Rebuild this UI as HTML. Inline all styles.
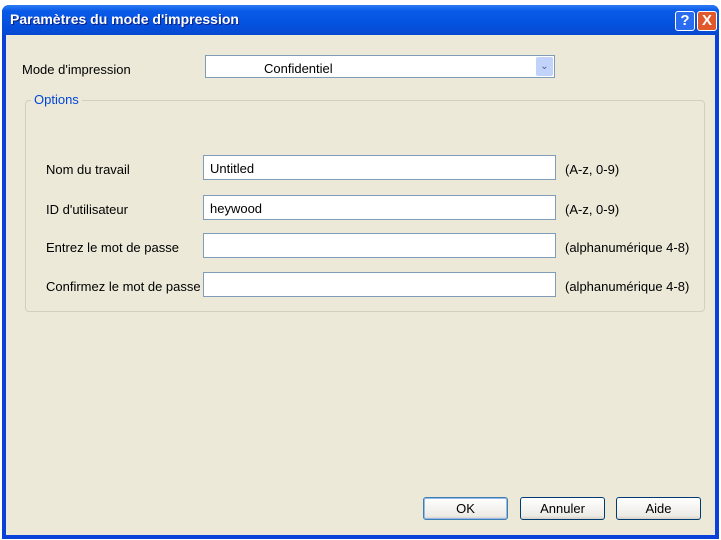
<!DOCTYPE html><html><head><style>
body{margin:0;width:721px;height:540px;background:#fff;position:relative;overflow:hidden;font-family:"Liberation Sans",sans-serif;font-size:13px;color:#000}
.a{position:absolute}
.win{left:2px;top:5px;width:717px;height:534px;background:#0842d8;border-radius:7px 7px 0 0}
.title{left:2px;top:5px;width:717px;height:30px;border-radius:7px 7px 0 0;background:linear-gradient(#2d7cf5,#0a5ae8 20%,#0452e0 60%,#0649d0)}
.body{left:6px;top:35px;width:709px;height:500px;background:#ece9d8}
.inp{background:#fff;border:1px solid #7f9db9;height:22px;box-sizing:border-box;padding:5px 6px 0;font-size:13px}
.lab{font-size:13px}
.btn{height:23px;width:85px;box-sizing:border-box;border:1px solid #003c74;border-radius:3px;background:linear-gradient(#fff,#ecebe6 85%,#d6d0c5);text-align:center;line-height:21px;font-size:13px}
</style></head><body>
<div class="a win"></div>
<div class="a title"></div>
<div class="a" style="left:10px;top:11px;color:#fff;font-weight:bold;font-size:14px;text-shadow:1px 1px #0a1e80">Paramètres du mode d'impression</div>
<div class="a" style="left:675px;top:11px;width:20px;height:20px;border:1px solid #fff;border-radius:3px;background:#2a6cf0;box-sizing:border-box;color:#fff;font-weight:bold;text-align:center;font-size:15px;line-height:18px">?</div>
<div class="a" style="left:697px;top:11px;width:20px;height:20px;border:1px solid #fff;border-radius:3px;background:#e0582c;box-sizing:border-box;color:#fff;font-weight:bold;text-align:center;font-size:15px;line-height:18px">X</div>
<div class="a body"></div>
<div class="a lab" style="left:22px;top:62px">Mode d'impression</div>
<div class="a inp" style="left:205px;top:55px;width:350px;height:23px;padding:5px 0 0 58px">Confidentiel</div>
<div class="a" style="left:536px;top:57px;width:17px;height:19px;background:#c1d3fb;border-radius:2px;color:#4d6185;font-size:10px;text-align:center;line-height:19px">&#8964;</div>
<div class="a" style="left:25px;top:100px;width:680px;height:212px;border:1px solid #d0d0bf;border-radius:4px;box-sizing:border-box"></div>
<div class="a" style="left:31px;top:92px;background:#ece9d8;color:#0046d5;padding:0 3px">Options</div>
<div class="a lab" style="left:46px;top:162px">Nom du travail</div>
<div class="a lab" style="left:46px;top:202px">ID d'utilisateur</div>
<div class="a lab" style="left:46px;top:240px">Entrez le mot de passe</div>
<div class="a lab" style="left:46px;top:279px">Confirmez le mot de passe</div>
<div class="a inp" style="left:203px;top:155px;width:353px;height:25px">Untitled</div>
<div class="a inp" style="left:203px;top:195px;width:353px;height:25px">heywood</div>
<div class="a inp" style="left:203px;top:233px;width:353px;height:25px"></div>
<div class="a inp" style="left:203px;top:272px;width:353px;height:25px"></div>
<div class="a lab" style="left:565px;top:162px">(A-z, 0-9)</div>
<div class="a lab" style="left:565px;top:202px">(A-z, 0-9)</div>
<div class="a lab" style="left:565px;top:240px">(alphanumérique 4-8)</div>
<div class="a lab" style="left:565px;top:279px">(alphanumérique 4-8)</div>
<div class="a btn" style="left:423px;top:497px;border-color:#3c7fb1;box-shadow:inset 0 0 0 1px #98b8ea">OK</div>
<div class="a btn" style="left:520px;top:497px">Annuler</div>
<div class="a btn" style="left:616px;top:497px">Aide</div>
</body></html>
